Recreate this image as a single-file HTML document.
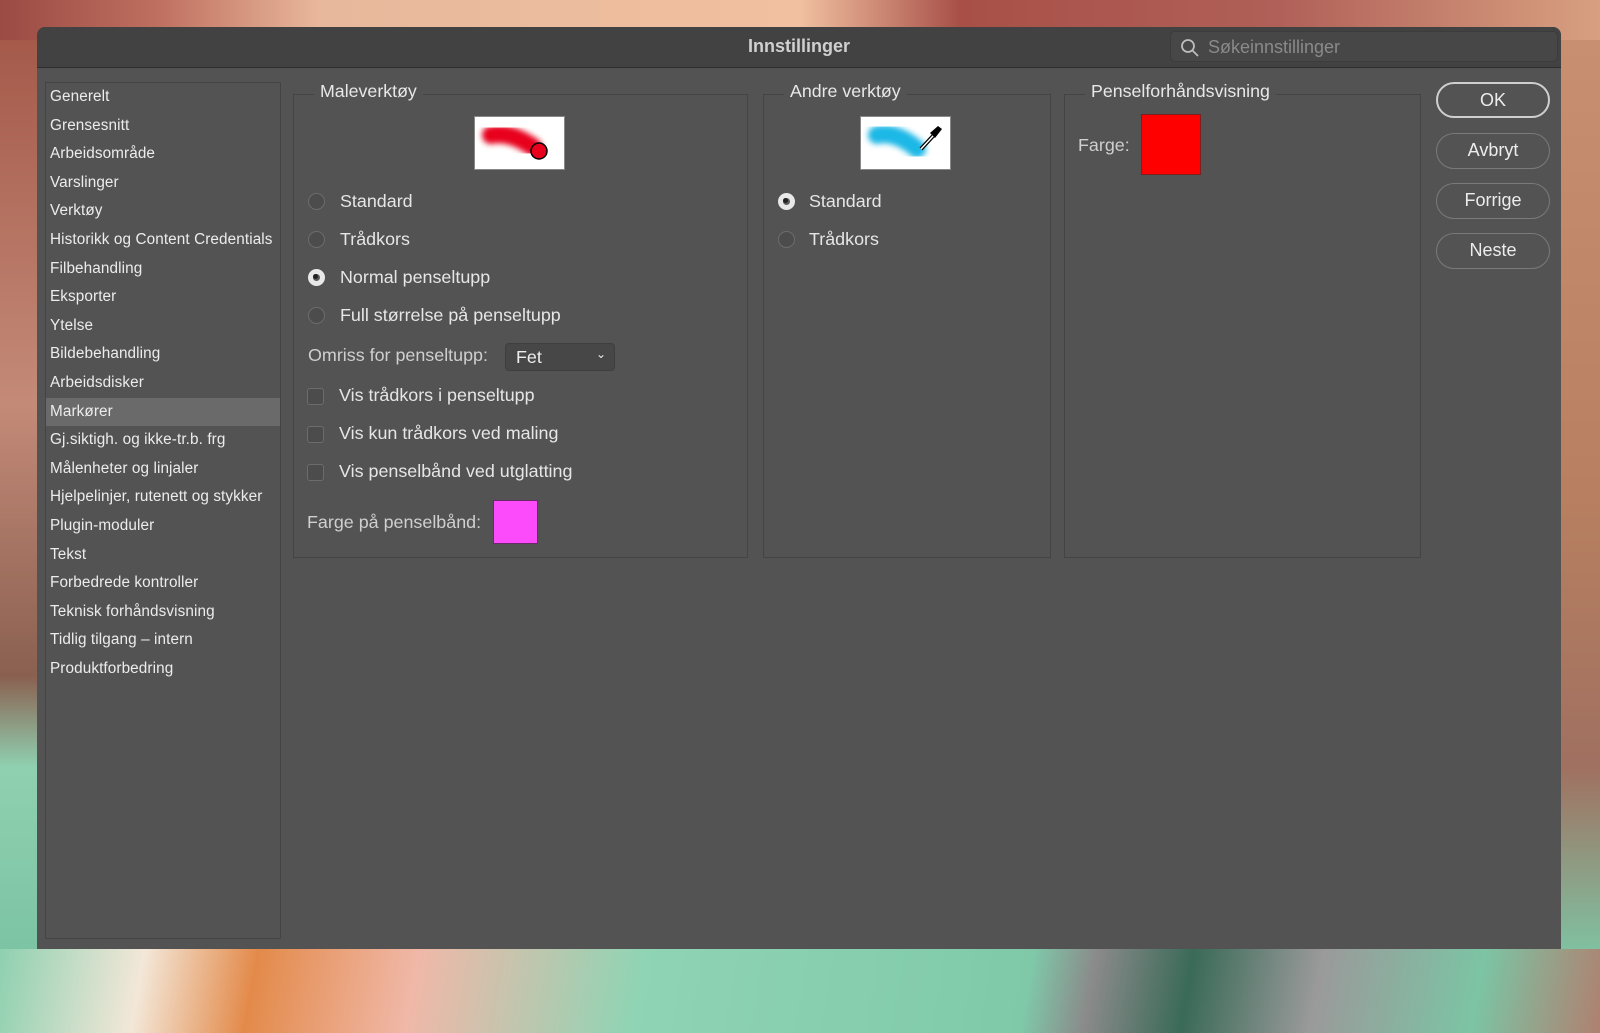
<!DOCTYPE html>
<html><head><meta charset="utf-8"><style>
*{margin:0;padding:0;box-sizing:border-box}
body{width:1600px;height:1033px;overflow:hidden;position:relative;font-family:"Liberation Sans",sans-serif;
background:linear-gradient(180deg,#e9b496 0%,#d79a86 30%,#b97766 60%,#8fc7ad 80%,#7cc4a4 100%)}
.bg1{position:absolute;left:0;top:0;width:1600px;height:40px;background:linear-gradient(90deg,#9b4a44 0%,#c07060 10%,#e8b89c 20%,#f0c0a0 50%,#a85048 60%,#b06058 80%,#d8a080 100%)}
.bg2{position:absolute;left:0;top:949px;width:1600px;height:84px;background:linear-gradient(100deg,#8ed0b0 0%,#f3e7d8 9%,#e38a4a 16%,#f0b8a8 26%,#8fd4b4 40%,#7fc9a9 64%,#8a8a8a 68%,#3a6a58 74%,#9a9a9a 82%,#7cc4a4 92%,#b08070 100%)}
.bgl{position:absolute;left:0;top:40px;width:38px;height:909px;background:linear-gradient(180deg,#a55a4a,#c48a78 40%,#8a6050 70%,#8fd0b0 80%,#7cc4a4)}
.bgr{position:absolute;left:1561px;top:40px;width:39px;height:909px;background:linear-gradient(180deg,#c89070,#b88060 50%,#a07060 80%,#80c0a0)}
.dlg{position:absolute;left:37px;top:27px;width:1524px;height:922px;background:#535353;border-radius:8px 8px 0 0;overflow:hidden}
.tb{position:absolute;left:0;top:0;width:100%;height:41px;background:#424242;border-bottom:1px solid #2e2e2e}
.title{position:absolute;left:0;width:100%;top:9px;text-align:center;color:#d0d0d0;font-weight:bold;font-size:18px}
.search{position:absolute;left:1133px;top:4px;width:388px;height:31px;background:#474747;border:1px solid #3c3c3c;border-radius:5px;color:#8a8a8a;font-size:18px;padding:5px 0 0 37px}
.side{position:absolute;left:8px;top:55px;width:236px;height:857px;border:1px solid #444;background:#535353}
.side div{height:28.6px;line-height:28px;color:#ececec;font-size:15.3px;padding-left:4px;letter-spacing:0.1px}
.side .sel{background:#6a6a6a}
.grp{position:absolute;border:1px solid #444;top:67px;height:464px}
.gt{position:absolute;top:-14px;background:#535353;color:#e8e8e8;font-size:17.8px;padding:0 6px}
.t{position:absolute;color:#e6e6e6;font-size:17.9px;white-space:nowrap}
.rad{position:absolute;width:17px;height:17px;border-radius:50%;border:1.5px solid #6c6c6c;background:#4c4c4c}
.rad.on{background:#5a5a5a;border:5px solid #e8e8e8}
.rad.on::after{content:"";position:absolute;left:0;top:0;width:5px;height:5px;background:#222;border-radius:50%}
.cb{position:absolute;width:17px;height:17px;border:1.5px solid #6c6c6c;border-radius:3px;background:#4c4c4c}
.btn{position:absolute;left:1399px;width:114px;height:36px;border:1.5px solid #7a7a7a;border-radius:18px;color:#ececec;font-size:18px;text-align:center;line-height:33px}
.prev{position:absolute;width:91px;height:54px;background:#fff;border:1px solid #888}
</style></head><body>
<div class="bg1"></div><div class="bgl"></div><div class="bgr"></div><div class="bg2"></div>
<div class="dlg">
 <div class="tb"><div class="title">Innstillinger</div>
  <div class="search"><svg style="position:absolute;left:9px;top:6px" width="20" height="20" viewBox="0 0 20 20"><circle cx="8" cy="8" r="6" fill="none" stroke="#bdbdbd" stroke-width="1.8"/><path d="M12.5 12.5L18 18" stroke="#bdbdbd" stroke-width="1.8"/></svg>Søkeinnstillinger</div></div>
 <div class="side">
  <div>Generelt</div><div>Grensesnitt</div><div>Arbeidsområde</div><div>Varslinger</div><div>Verktøy</div><div>Historikk og Content Credentials</div><div>Filbehandling</div><div>Eksporter</div><div>Ytelse</div><div>Bildebehandling</div><div>Arbeidsdisker</div><div class="sel">Markører</div><div>Gj.siktigh. og ikke-tr.b. frg</div><div>Målenheter og linjaler</div><div>Hjelpelinjer, rutenett og stykker</div><div>Plugin-moduler</div><div>Tekst</div><div>Forbedrede kontroller</div><div>Teknisk forhåndsvisning</div><div>Tidlig tilgang – intern</div><div>Produktforbedring</div>
 </div>
 <div class="grp" style="left:256px;width:455px"><div class="gt" style="left:20px">Maleverktøy</div></div>
 <div class="grp" style="left:726px;width:288px"><div class="gt" style="left:20px">Andre verktøy</div></div>
 <div class="grp" style="left:1027px;width:357px"><div class="gt" style="left:20px">Penselforhåndsvisning</div></div>
 <div class="prev" style="left:437px;top:89px"><svg width="89" height="52"><defs><filter id="b" x="-50%" y="-50%" width="200%" height="200%"><feGaussianBlur stdDeviation="3"/></filter></defs><path d="M16 18 Q35 14 58 30" stroke="#e8001c" stroke-width="18" fill="none" stroke-linecap="round" filter="url(#b)"/><circle cx="64" cy="34" r="8" fill="#e8001c" stroke="#000" stroke-width="1.5"/></svg></div>
 <div class="prev" style="left:823px;top:89px"><svg width="89" height="52"><defs><filter id="c" x="-50%" y="-50%" width="200%" height="200%"><feGaussianBlur stdDeviation="3"/></filter></defs><path d="M16 18 Q35 14 56 32" stroke="#1fb8e6" stroke-width="18" fill="none" stroke-linecap="round" filter="url(#c)"/><path d="M60 32 L72 19" stroke="#000" stroke-width="4"/><path d="M69 16 L77 9 L81 12 L74 21Z" fill="#000"/><path d="M60 32 L72 19" stroke="#fff" stroke-width="1.5"/></svg></div>
 <div class="rad" style="left:271px;top:166px"></div><div class="t" style="left:303px;top:164px">Standard</div>
 <div class="rad" style="left:271px;top:204px"></div><div class="t" style="left:303px;top:202px">Trådkors</div>
 <div class="rad on" style="left:271px;top:242px"></div><div class="t" style="left:303px;top:240px">Normal penseltupp</div>
 <div class="rad" style="left:271px;top:280px"></div><div class="t" style="left:303px;top:278px">Full størrelse på penseltupp</div>
 <div class="t" style="left:271px;top:318px;color:#cfcfcf">Omriss for penseltupp:</div>
 <div style="position:absolute;left:468px;top:316px;width:110px;height:28px;background:#474747;border:1px solid #3e3e3e;border-radius:4px;color:#eee;font-size:17.9px;padding:3px 0 0 10px">Fet<span style="position:absolute;right:8px;top:3px;font-size:12px">&#8964;</span></div>
 <div class="cb" style="left:270px;top:361px"></div><div class="t" style="left:302px;top:358px">Vis trådkors i penseltupp</div>
 <div class="cb" style="left:270px;top:399px"></div><div class="t" style="left:302px;top:396px">Vis kun trådkors ved maling</div>
 <div class="cb" style="left:270px;top:437px"></div><div class="t" style="left:302px;top:434px">Vis penselbånd ved utglatting</div>
 <div class="t" style="left:270px;top:485px;color:#cfcfcf">Farge på penselbånd:</div>
 <div style="position:absolute;left:456px;top:473px;width:45px;height:44px;background:#fb4bfb;border:1px solid #6a2a6a"></div>
 <div class="rad on" style="left:741px;top:166px"></div><div class="t" style="left:772px;top:164px">Standard</div>
 <div class="rad" style="left:741px;top:204px"></div><div class="t" style="left:772px;top:202px">Trådkors</div>
 <div class="t" style="left:1041px;top:108px;color:#cfcfcf">Farge:</div>
 <div style="position:absolute;left:1104px;top:87px;width:60px;height:61px;background:#fe0000;border:1px solid #7a2020"></div>
 <div class="btn" style="top:55px;border-color:#cfcfcf;border-width:2px">OK</div>
 <div class="btn" style="top:106px">Avbryt</div>
 <div class="btn" style="top:156px">Forrige</div>
 <div class="btn" style="top:206px">Neste</div>
</div>
</body></html>
